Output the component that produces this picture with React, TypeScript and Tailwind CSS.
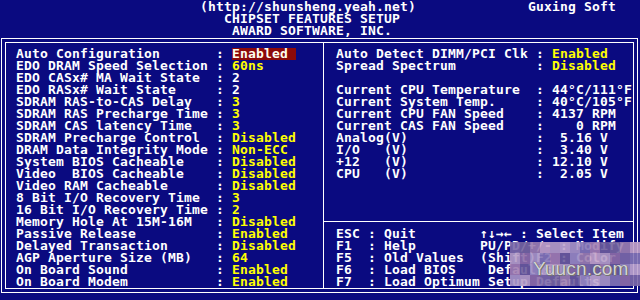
import React from "react";

type Item = { label: string; value: string; color: "y" | "w"; hl?: boolean } | null;

const left: Item[] = [
  { label: "Auto Configuration", value: "Enabled", color: "w", hl: true },
  { label: "EDO DRAM Speed Selection", value: "60ns", color: "y" },
  { label: "EDO CASx# MA Wait State", value: "2", color: "w" },
  { label: "EDO RASx# Wait State", value: "2", color: "w" },
  { label: "SDRAM RAS-to-CAS Delay", value: "3", color: "y" },
  { label: "SDRAM RAS Precharge Time", value: "3", color: "y" },
  { label: "SDRAM CAS latency Time", value: "3", color: "y" },
  { label: "SDRAM Precharge Control", value: "Disabled", color: "y" },
  { label: "DRAM Data Integrity Mode", value: "Non-ECC", color: "y" },
  { label: "System BIOS Cacheable", value: "Disabled", color: "y" },
  { label: "Video  BIOS Cacheable", value: "Disabled", color: "y" },
  { label: "Video RAM Cacheable", value: "Disabled", color: "y" },
  { label: "8 Bit I/O Recovery Time", value: "3", color: "y" },
  { label: "16 Bit I/O Recovery Time", value: "2", color: "y" },
  { label: "Memory Hole At 15M-16M", value: "Disabled", color: "y" },
  { label: "Passive Release", value: "Enabled", color: "y" },
  { label: "Delayed Transaction", value: "Disabled", color: "y" },
  { label: "AGP Aperture Size (MB)", value: "64", color: "y" },
  { label: "On Board Sound", value: "Enabled", color: "y" },
  { label: "On Board Modem", value: "Enabled", color: "y" },
];

const right: Item[] = [
  { label: "Auto Detect DIMM/PCI Clk", value: "Enabled", color: "y" },
  { label: "Spread Spectrum", value: "Disabled", color: "y" },
  null,
  { label: "Current CPU Temperature", value: "44°C/111°F", color: "w" },
  { label: "Current System Temp.", value: "40°C/105°F", color: "w" },
  { label: "Current CPU FAN Speed", value: "4137 RPM", color: "w" },
  { label: "Current CAS FAN Speed", value: "   0 RPM", color: "w" },
  { label: "Analog(V)", value: " 5.16 V", color: "w" },
  { label: "I/O   (V)", value: " 3.40 V", color: "w" },
  { label: "+12   (V)", value: "12.10 V", color: "w" },
  { label: "CPU   (V)", value: " 2.05 V", color: "w" },
  null,
  null,
  null,
];

function Row({ item }: { item: Item }) {
  if (!item) return <div className="h-[12px]" />;
  return (
    <div className="h-[12px] whitespace-pre">
      {item.label.padEnd(25)}
      {": "}
      {item.hl ? (
        <span className="inline-block w-[64px] h-[12px] bg-[#8c0a0a] text-[#fffff0]">{item.value}</span>
      ) : (
        <span className={item.color === "y" ? "text-[#ffff00]" : "text-white"}>{item.value}</span>
      )}
    </div>
  );
}

function Arrows() {
  return (
    <>
      <span className="inline-block w-[8px]">↑</span>
      <span className="inline-block w-[8px]">↓</span>
      <span className="inline-block w-[8px]">→</span>
      <span className="inline-block w-[8px]">←</span>
    </>
  );
}

const palette = ["#7d6aa9", "#9b8ac2", "#8f6ea8", "#6c5c9c", "#b69ec8", "#a37fb2", "#c3a2c9", "#8576b6", "#9d7fb0", "#aa96c6", "#76659f", "#bfa6cf"];

function Watermark() {
  const cells: string[] = [];
  for (let i = 0; i < 52; i++) cells.push(palette[(i * 7 + (i % 5) * 3) % palette.length]);
  return (
    <div className="absolute left-[510px] top-[242px] w-[130px] h-[43px]">
      <div className="grid grid-cols-[repeat(13,10px)] grid-rows-[repeat(4,11px)] opacity-90">
        {cells.map((c, i) => (
          <div key={i} style={{ backgroundColor: c }} />
        ))}
      </div>
      <div className="absolute left-[23px] top-[17px] font-['Liberation_Sans',sans-serif] font-normal text-[19px] leading-[20px] text-[#d4d4d4] [text-shadow:0_0_1px_#555,1px_1px_0_#777]">
        Yuucn.com
      </div>
    </div>
  );
}

export default function App() {
  return (
    <div className="relative w-[640px] h-[300px] overflow-hidden bg-[#0a0a80] text-white font-['DejaVu_Sans_Mono',monospace] font-bold text-[13px] tracking-[0.174px] leading-[12px]">
      <div className="h-[36px] pt-[1px]">
        <div className="h-[12px] whitespace-pre">{" ".repeat(25) + "(http://shunsheng.yeah.net)" + " ".repeat(14) + "Guxing Soft"}</div>
        <div className="h-[12px] whitespace-pre">{" ".repeat(28) + "CHIPSET FEATURES SETUP"}</div>
        <div className="h-[11px] whitespace-pre">{" ".repeat(29) + "AWARD SOFTWARE, INC."}</div>
      </div>
      <div className="ml-[1px] mt-[2px] w-[637px] h-[255px] border border-white p-[3px]">
        <div className="h-full border border-white flex">
          <div className="w-[317px] pt-[5px] pl-[10px]">
            {left.map((it, i) => (
              <Row key={i} item={it} />
            ))}
          </div>
          <div className="w-px bg-white" />
          <div className="flex-1 flex flex-col pt-[5px]">
            <div className="pl-[12px]">
              {right.map((it, i) => (
                <Row key={i} item={it} />
              ))}
            </div>
            <div className="h-[12px] pt-[5px]">
              <div className="h-px bg-white" />
            </div>
            <div className="pl-[12px]">
              <div className="h-[12px] whitespace-pre">
                {"ESC : Quit        "}
                <Arrows />
                {" : Select Item"}
              </div>
              <div className="h-[12px] whitespace-pre">{"F1  : Help        PU/PD/+/- : Modify"}</div>
              <div className="h-[12px] whitespace-pre">{"F5  : Old Values  (Shift)F2 : Color"}</div>
              <div className="h-[12px] whitespace-pre">{"F6  : Load BIOS    Defaults"}</div>
              <div className="h-[12px] whitespace-pre">{"F7  : Load Optimum Setup Defaults"}</div>
            </div>
          </div>
        </div>
      </div>
      <Watermark />
    </div>
  );
}
